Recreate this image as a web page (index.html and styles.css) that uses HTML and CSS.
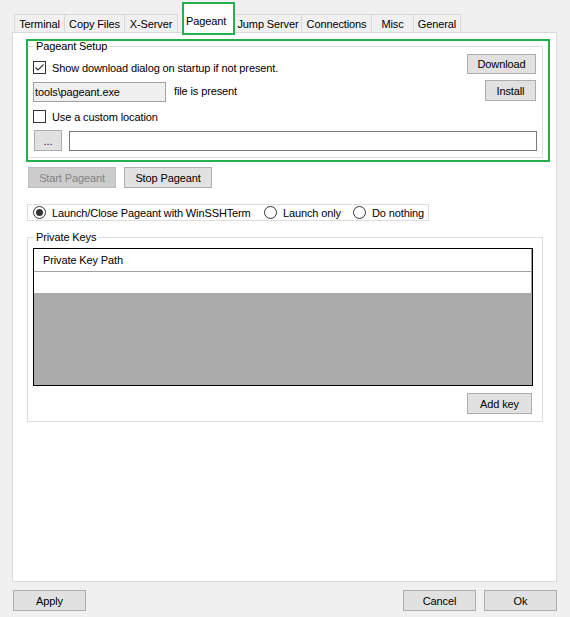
FILE: index.html
```html
<!DOCTYPE html>
<html>
<head>
<meta charset="utf-8">
<link rel="stylesheet" href="styles.css">
</head>
<body>
<div class="window">
  <div class="tabs">
    <div class="tab tab-first w-terminal">Terminal</div>
    <div class="tab w-copy">Copy Files</div>
    <div class="tab w-xserver">X-Server</div>
    <div class="tab-active">Pageant</div>
    <div class="tab w-jump">Jump Server</div>
    <div class="tab w-conn">Connections</div>
    <div class="tab w-misc">Misc</div>
    <div class="tab w-general">General</div>
  </div>
  <div class="panel">
    <div class="highlight">
      <fieldset class="group group-setup">
        <legend>Pageant Setup</legend>
        <div class="row row1">
          <div class="check">
            <span class="box"><svg width="11" height="11" viewBox="0 0 11 11"><polyline points="1.5,5.5 4,8 9.5,2.5" fill="none" stroke="#333" stroke-width="1.1"/></svg></span>
            <span class="check-label">Show download dialog on startup if not present.</span>
          </div>
          <div class="btn btn-download">Download</div>
        </div>
        <div class="row row2">
          <div class="textbox textbox-ro">tools\pageant.exe</div>
          <div class="file-status">file is present</div>
          <div class="spacer"></div>
          <div class="btn btn-install">Install</div>
        </div>
        <div class="row row3">
          <div class="check">
            <span class="box"></span>
            <span class="check-label">Use a custom location</span>
          </div>
        </div>
        <div class="row row4">
          <div class="btn btn-browse">...</div>
          <div class="textbox textbox-path"></div>
        </div>
      </fieldset>
    </div>
    <div class="actions">
      <div class="btn btn-action btn-disabled">Start Pageant</div>
      <div class="btn btn-action">Stop Pageant</div>
    </div>
    <div class="radios">
      <div class="radio radio-1"><span class="circle selected"><span class="dot"></span></span><span>Launch/Close Pageant with WinSSHTerm</span></div>
      <div class="radio radio-2"><span class="circle"></span><span>Launch only</span></div>
      <div class="radio radio-3"><span class="circle"></span><span>Do nothing</span></div>
    </div>
    <fieldset class="group group-keys">
      <legend>Private Keys</legend>
      <div class="grid">
        <div class="grid-header">Private Key Path</div>
        <div class="grid-row"></div>
      </div>
      <div class="keys-actions">
        <div class="btn btn-addkey">Add key</div>
      </div>
    </fieldset>
  </div>
  <div class="footer">
    <div class="btn btn-footer">Apply</div>
    <div class="spacer"></div>
    <div class="btn btn-footer">Cancel</div>
    <div class="btn btn-footer btn-ok">Ok</div>
  </div>
</div>
</body>
</html>
```
FILE: styles.css
```css
* { box-sizing: border-box; }
html, body {
  margin: 0;
  padding: 0;
  background: #f0f0f0;
}
body {
  font-family: "Liberation Sans", Arial, sans-serif;
  font-size: 11px;
  letter-spacing: -0.12px;
  color: #000;
  width: 570px;
  height: 617px;
  overflow: hidden;
}
.window {
  padding-top: 14px;
}

/* Tabs */
.tabs {
  display: flex;
  align-items: flex-start;
  height: 18px;
  padding-left: 14px;
}
.tab {
  height: 18px;
  border: 1px solid #d9d9d9;
  border-left: none;
  border-bottom: none;
  background: #f0f0f0;
  line-height: 18px;
  text-align: center;
  white-space: nowrap;
}
.tab-first { border-left: 1px solid #d9d9d9; }
.w-terminal { width: 51px; }
.w-copy { width: 60px; }
.w-xserver { width: 53px; }
.w-jump { width: 67px; }
.w-conn { width: 70px; }
.w-misc { width: 42px; }
.w-general { width: 47px; }
.tab-active {
  position: relative;
  z-index: 2;
  width: 53px;
  height: 33px;
  margin-top: -12px;
  margin-left: 4px;
  border: 2px solid #22b14c;
  background: #fff;
  padding-top: 11px;
  padding-left: 2px;
  line-height: 13px;
  white-space: nowrap;
}

/* Panel */
.panel {
  margin-left: 12px;
  width: 545px;
  height: 550px;
  border: 1px solid #d9d9d9;
  background: #fff;
  padding-top: 6px;
  padding-left: 13px;
}

.highlight {
  width: 524px;
  height: 123px;
  border: 2px solid #22b14c;
}

fieldset.group {
  margin: 0;
  border: 1px solid #dcdcdc;
  min-width: 0;
}
fieldset.group legend {
  padding: 0 2px 0 3px;
  margin: 0;
}
.group-setup {
  width: 515px;
  border-left: none !important;
  padding: 0 5px 6px 5px;
}
.group-setup legend { line-height: 11px; }

.row { display: flex; }
.row1 {
  margin-top: 2px;
  height: 20px;
  justify-content: space-between;
  align-items: flex-start;
}
.check {
  display: flex;
  align-items: center;
  height: 13px;
}
.row1 .check { margin-top: 7px; }
.box {
  width: 13px;
  height: 13px;
  border: 1px solid #333;
  background: #fff;
  display: flex;
  align-items: center;
  justify-content: center;
}
.box svg { display: block; }
.check-label {
  margin-left: 6px;
  white-space: nowrap;
}

.btn {
  height: 21px;
  border: 1px solid #adadad;
  background: #e1e1e1;
  display: flex;
  align-items: center;
  justify-content: center;
  white-space: nowrap;
}
.btn-download { width: 69px; height: 20px; margin-right: 1px; }

.row2 {
  margin-top: 6px;
  height: 22px;
  align-items: flex-start;
}
.textbox {
  height: 20px;
  border: 1px solid #7a7a7a;
  background: #fff;
  line-height: 18px;
  padding-left: 1px;
  white-space: nowrap;
}
.textbox-ro {
  width: 133px;
  margin-top: 2px;
  background: #f0f0f0;
  border-color: #a0a0a0;
}
.file-status {
  margin-left: 8px;
  line-height: 22px;
}
.spacer { flex: 1; }
.btn-install { width: 51px; margin-right: 1px; }

.row3 {
  margin-top: 8px;
  height: 13px;
}
.row4 {
  margin-top: 7px;
  height: 21px;
  align-items: flex-start;
}
.btn-browse { width: 28px; margin-left: 1px; color: #400040; }
.textbox-path {
  flex: 1;
  margin-left: 7px;
  margin-top: 1px;
}

/* Start / Stop */
.actions {
  display: flex;
  gap: 8px;
  margin-top: 5px;
  margin-left: 2px;
}
.btn-action { width: 88px; }
.btn-disabled {
  background: #cccccc;
  border-color: #bfbfbf;
  color: #838383;
}

/* Radios */
.radios {
  display: flex;
  align-items: center;
  margin-top: 16px;
  margin-left: 1px;
  width: 402px;
  height: 17px;
  border: 1px solid #dcdcdc;
  padding-left: 5px;
}
.radio {
  display: flex;
  align-items: center;
  white-space: nowrap;
}
.radio-1 { width: 231px; }
.radio-2 { width: 89px; }
.circle {
  width: 13px;
  height: 13px;
  border: 1px solid #333;
  border-radius: 50%;
  background: #fff;
  margin-right: 6px;
  display: flex;
  align-items: center;
  justify-content: center;
}
.dot {
  width: 7px;
  height: 7px;
  border-radius: 50%;
  background: #333;
}

/* Private keys */
.group-keys {
  margin-top: 10px !important;
  margin-left: 1px !important;
  width: 516px;
  padding: 0 5px 7px 5px;
}
.group-keys legend { line-height: 12px; }
.grid {
  margin-top: 5px;
  width: 500px;
  height: 138px;
  border: 1px solid #000;
  background: #ababab;
}
.grid-header {
  height: 23px;
  background: #fff;
  border-bottom: 1px solid #a0a0a0;
  border-right: 1px solid #a0a0a0;
  padding-left: 9px;
  line-height: 22px;
}
.grid-row {
  height: 21px;
  background: #fff;
  border-right: 1px solid #a0a0a0;
}
.keys-actions {
  display: flex;
  justify-content: flex-end;
  width: 500px;
  margin-top: 7px;
}
.btn-addkey { width: 65px; margin-right: 1px; }

/* Footer */
.footer {
  display: flex;
  margin-top: 8px;
  padding-left: 13px;
  padding-right: 13px;
  gap: 8px;
}
.btn-footer { width: 73px; }
```
